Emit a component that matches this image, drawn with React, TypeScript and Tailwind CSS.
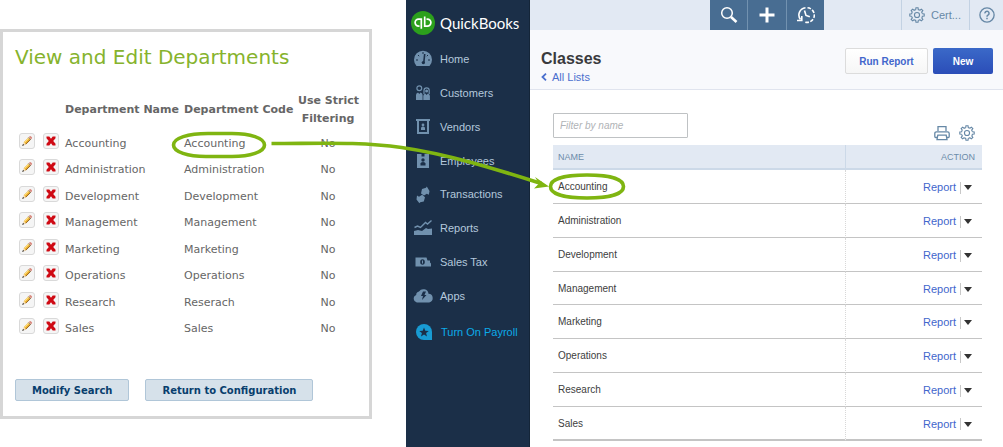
import React from "react";

const departments: [string, string][] = [
  ["Accounting", "Accounting"],
  ["Administration", "Administration"],
  ["Development", "Development"],
  ["Management", "Management"],
  ["Marketing", "Marketing"],
  ["Operations", "Operations"],
  ["Research", "Reserach"],
  ["Sales", "Sales"],
];

const classes = [
  "Accounting",
  "Administration",
  "Development",
  "Management",
  "Marketing",
  "Operations",
  "Research",
  "Sales",
];

function PencilIcon() {
  return (
    <svg viewBox="0 0 14 14" className="size-[14px]" aria-hidden="true">
      <path d="M3.700 8.200 8.700 3.200l2.200 2.200-5 5z" fill="#f0b430" />
      <path d="M4.400 8.700 9.300 3.800" stroke="#ffe48a" strokeWidth="1" />
      <path d="M5.600 10.300 10.700 5.300" stroke="#8a5a20" strokeWidth="0.9" />
      <path d="m8.800 3.100.9-.9q.6-.5 1.200 0l1 1q.5.6 0 1.200l-.9.9z" fill="#d98a80" />
      <path d="m8.300 3.500 2.300 2.300" stroke="#777" strokeWidth="0.8" />
      <path d="m3.700 8.200 2.200 2.200-3.400 1.300z" fill="#f3d9b0" />
      <path d="m3 9.900 1.300 1.200-2.200.9z" fill="#222" />
    </svg>
  );
}

function CrossIcon() {
  return (
    <svg viewBox="0 0 14 14" className="size-[14px]" aria-hidden="true">
      <path d="M2.500 2.500h2.800L7 4.700l1.700-2.200h2.800v1.700L9.200 7l2.300 2.800v1.700H8.700L7 9.300l-1.700 2.200H2.500V9.800L4.800 7 2.500 4.200z" fill="#cf0a14" />
    </svg>
  );
}

function GearIcon({ className }: { className: string }) {
  const tooth = "M8.400 3.300 8.700 1h2.600l.3 2.300";
  return (
    <svg viewBox="0 0 20 20" className={className} fill="none" stroke="currentColor" strokeWidth="1.400" aria-hidden="true">
      {[0, 45, 90, 135, 180, 225, 270, 315].map((a) => (
        <path key={a} d={tooth + "q1.600.400 2.100.900"} transform={`rotate(${a} 10 10)`} />
      ))}
      <circle cx="10" cy="10" r="3.200" />
    </svg>
  );
}

function NavIcon({ children }: { children: React.ReactNode }) {
  return (
    <svg viewBox="0 0 20 20" className="size-5 shrink-0" fill="currentColor" aria-hidden="true">
      {children}
    </svg>
  );
}

const dark = "#1b2f48";

const nav: { label: string; icon: React.ReactNode }[] = [
  {
    label: "Home",
    icon: (
      <>
        <path d="M3.500 17A9 9 0 1 1 16.500 17z" />
        <path d="M10 3v2M3 11h2M15 11h2M5 6l1.200 1.200M15 6l-1.200 1.200" stroke={dark} strokeWidth="1" />
        <path d="m11.700 5-1 9.500" stroke={dark} strokeWidth="1.600" />
        <circle cx="10.300" cy="13.600" r="1.600" fill={dark} />
      </>
    ),
  },
  {
    label: "Customers",
    icon: (
      <>
        <circle cx="6.300" cy="5.200" r="2.400" fill="none" stroke="currentColor" strokeWidth="1.200" />
        <path d="M3 17v-5q0-2 2-2.500L6.300 11l1.300-1.500q2 .5 2 2.500v5z" />
        <path d="M11 11V7.500a2.600 2.600 0 0 1 5.200 0V11" fill="none" stroke="currentColor" strokeWidth="1.200" />
        <circle cx="13.600" cy="8" r="1.500" />
        <path d="M10.300 17v-4q0-2 2-2.500l1.300 1.500 1.300-1.500q2 .5 2 2.500v4z" />
      </>
    ),
  },
  {
    label: "Vendors",
    icon: (
      <>
        <path d="M3 2h14v2H3zM4 4h2v13H4zM14 4h2v13h-2zM4 15h12v2H4z" />
        <circle cx="10" cy="8" r="1.400" />
        <path d="M8 13v-2q0-1.500 2-1.500t2 1.500v2z" />
      </>
    ),
  },
  {
    label: "Employees",
    icon: (
      <>
        <path d="M4 3h12v14H4z" />
        <path d="M8.500 3h3v2.500h-3z" fill={dark} />
        <circle cx="10" cy="9" r="1.700" fill={dark} />
        <path d="M7.500 14.500v-2q0-1.500 2.500-1.500t2.500 1.500v2z" fill={dark} />
      </>
    ),
  },
  {
    label: "Transactions",
    icon: (
      <>
        <path d="m8 8.500 1-4.500 4-1.200.8-1.300L16.500 6l-.7 3.800-2-1L11 10.500z" />
        <path d="m4 10.500 2 1.200 3.200-2L12 12.300l-1.200 4.200-3.600.8-.8 1L3.500 14.500z" />
      </>
    ),
  },
  {
    label: "Reports",
    icon: (
      <>
        <path d="m1.500 9.500 3-1.500 3 1.500 5-5 2 1.500 4-3.500" fill="none" stroke="currentColor" strokeWidth="1.400" />
        <path d="M1 17v-4l4-1 4 1 4-3 2 1 4-.5V17z" />
      </>
    ),
  },
  {
    label: "Sales Tax",
    icon: (
      <>
        <path d="M2.500 5.500h11l1 3h2.500v2l1 1v3h-15.500z" />
        <ellipse cx="9.500" cy="10" rx="2.300" ry="2.700" fill={dark} />
        <path d="M9.500 8.500v3" stroke="currentColor" />
      </>
    ),
  },
  {
    label: "Apps",
    icon: (
      <>
        <path d="M3.800 16.500a4 4 0 0 1-.6-7.600A3.500 3.500 0 0 1 6 5.500a5.200 5.200 0 0 1 9.500 2.300 4.400 4.400 0 0 1 .7 8.700z" />
        <path d="M10 5.500h3L11.500 9h2L9 14l1-4H8z" fill={dark} />
      </>
    ),
  },
];

export default function App() {
  return (
    <div className="relative flex min-h-screen items-stretch overflow-hidden bg-white font-['Liberation_Sans',Arial,sans-serif] text-[11px]">
      <section className="mt-[29px] mr-[34px] w-[372px] shrink-0 self-start border-[3px] border-[#d6d6d6] px-3 pt-[11px] pb-[15px] font-['DejaVu_Sans',Verdana,sans-serif] text-[#666]">
        <h1 className="text-[20px] leading-7 whitespace-nowrap text-[#86b32d]">View and Edit Departments</h1>
        <table className="mt-5 w-[343px] table-fixed border-collapse">
          <colgroup>
            <col className="w-[50px]" />
            <col className="w-[119px]" />
            <col className="w-[114px]" />
            <col className="w-[60px]" />
          </colgroup>
          <thead>
            <tr className="h-[38px] leading-[18px] whitespace-nowrap">
              <td />
              <th className="p-0 text-left">Department Name</th>
              <th className="p-0 text-left">Department Code</th>
              <th className="p-0">
                Use Strict
                <br />
                Filtering
              </th>
            </tr>
          </thead>
          <tbody>
            {departments.map(([name, code]) => (
              <tr key={name} className="h-[26px] odd:h-[27px]">
                <td className="p-0">
                  <div className="flex gap-2 pb-1 pl-1">
                    <button aria-label={`Edit ${name}`} className="flex size-4 items-center justify-center rounded-[3px] border border-[#d9d9d9] bg-[#f5f5f5]">
                      <PencilIcon />
                    </button>
                    <button aria-label={`Delete ${name}`} className="flex size-4 items-center justify-center rounded-[3px] border border-[#d9d9d9] bg-[#f5f5f5]">
                      <CrossIcon />
                    </button>
                  </div>
                </td>
                <td className="p-0 pt-[3px]">{name}</td>
                <td className="p-0 pt-[3px]">{code}</td>
                <td className="p-0 pt-[3px] text-center">No</td>
              </tr>
            ))}
          </tbody>
        </table>
        <div className="mt-[38px] flex gap-4 text-[10px] font-bold whitespace-nowrap text-[#083e6d]">
          <button className="h-[22px] rounded-[2px] border border-[#b0c6d8] bg-[#d6e1ea] px-4">Modify Search</button>
          <button className="h-[22px] rounded-[2px] border border-[#b0c6d8] bg-[#d6e1ea] px-4">Return to Configuration</button>
        </div>
      </section>

      <nav className="w-[124px] shrink-0 border-r border-[#142538] bg-[#1b2f48] text-[#b4c8dc]">
        <div className="flex h-[42px] items-center gap-[5px] pt-1 pl-[5px]">
          <svg viewBox="0 0 24 24" className="size-6 shrink-0" aria-hidden="true">
            <circle cx="12" cy="12" r="12" fill="#2ca01c" />
            <g fill="none" stroke="#fff" strokeWidth="1.700">
              <path d="M10.300 17.800V8.100H7.600a3.500 3.500 0 0 0 0 7h.9" />
              <path d="M13.700 5.500v9.600h2.700a3.500 3.500 0 0 0 0-7h-.9" />
            </g>
          </svg>
          <span className="font-['Lato',sans-serif] text-[15px] text-white">QuickBooks</span>
        </div>
        <ul>
          {nav.map((n) => (
            <li key={n.label} className="flex h-[34px] nth-5:h-[33px]">
              <a href="#" className="flex flex-1 items-center gap-[7px] pl-[7px]">
                <span className="flex text-[#7191ae]">
                  <NavIcon>{n.icon}</NavIcon>
                </span>
                {n.label}
              </a>
            </li>
          ))}
          <li>
            <a href="#" className="flex h-[38px] items-center gap-2 pl-[7px] text-[#0cabe9]">
              <span className="flex text-[#189bd3]">
                <NavIcon>
                  <path d="M11 2a8 8 0 1 0 0 16h8v-8a8 8 0 0 0-8-8z" />
                  <path d="m11 5.500 1.300 3.200 3.500.2-2.700 2.200.9 3.400-3-1.900-3 1.900.9-3.400-2.700-2.200 3.500-.2z" fill={dark} />
                </NavIcon>
              </span>
              Turn On Payroll
            </a>
          </li>
        </ul>
      </nav>

      <main className="min-w-0 flex-1">
        <div className="flex h-[30px] justify-end bg-[#e2e9f3] text-[#6688a6]">
          <div className="mr-[77px] flex divide-x divide-[#7292b0] bg-[#486d92] text-white">
            <button aria-label="Search" className="flex w-[38px] items-center justify-center">
              <svg viewBox="0 0 18 18" className="size-[18px]" fill="none" stroke="currentColor">
                <circle cx="7" cy="7" r="5.300" strokeWidth="1.500" />
                <path d="m11 11 5.500 5" strokeWidth="2.600" />
              </svg>
            </button>
            <button aria-label="Create" className="flex w-[39px] items-center justify-center">
              <svg viewBox="0 0 18 18" className="size-[18px]" stroke="currentColor" strokeWidth="3">
                <path d="M9 1.500v15M1.500 9h15" />
              </svg>
            </button>
            <button aria-label="Recent" className="flex w-[37px] items-center justify-center">
              <svg viewBox="0 0 18 18" className="size-[18px]" fill="none" stroke="currentColor" strokeWidth="1.600">
                <path d="M3.500 13.500A7.300 7.300 0 0 1 8.500 1.700" />
                <path d="M10.500 1.800a7.300 7.300 0 1 1-2.500 14.300" strokeDasharray="3.600 1.500" />
                <path d="M7.500 4.500 9 9.500l3.800 1.300" />
                <path d="M0 14.500h4.800V10" />
              </svg>
            </button>
          </div>
          <button className="flex w-[68px] items-center gap-[6px] border-l border-[#c3d2e3] pl-[7px]">
            <GearIcon className="size-4" />
            Cert...
          </button>
          <button aria-label="Help" className="flex w-[34px] items-center border-l border-[#c3d2e3] pl-[9px]">
            <svg viewBox="0 0 18 18" className="size-4" fill="none" stroke="currentColor" strokeWidth="1.500">
              <circle cx="9" cy="9" r="8" />
              <path d="M6.700 7.200a2.300 2.300 0 1 1 3.700 1.700q-1.400.9-1.400 2" strokeWidth="1.700" />
              <path d="M9 12v1.800" strokeWidth="1.700" />
            </svg>
          </button>
        </div>

        <header className="flex h-[60px] justify-between border-b border-[#e0e4ee] bg-[#f8f9fc] pr-[10px] pl-[11px]">
          <div className="pt-[19px]">
            <h2 className="text-[16px] leading-5 font-bold text-[#393a3d]">Classes</h2>
            <a href="#" className="flex items-center gap-[5px] leading-4 text-[#4a6fce]">
              <svg viewBox="0 0 6 8" className="h-2 w-[6px]" fill="none" stroke="currentColor" strokeWidth="1.800">
                <path d="M5 .7 1.500 4 5 7.300" />
              </svg>
              All Lists
            </a>
          </div>
          <div className="flex gap-[5px] pt-[18px] text-[10px] font-bold">
            <button className="h-[26px] w-[83px] rounded-[2px] border border-[#dcdcdc] bg-gradient-to-b from-white to-[#f6f6f6] text-[#4266cc]">
              Run Report
            </button>
            <button className="h-[26px] w-[60px] rounded-[2px] bg-gradient-to-b from-[#3b69c8] to-[#2b4db8] text-white">New</button>
          </div>
        </header>

        <div className="pr-[21px] pl-[23px]">
          <div className="flex h-[55px] items-start justify-between pt-[23px]">
            <input
              aria-label="Filter by name"
              placeholder="Filter by name"
              className="h-[25px] w-[135px] rounded-[1px] border border-[#bfc2c4] bg-white px-[6px] text-[10px] italic placeholder:text-[#b0b3b6]"
            />
            <div className="flex gap-[9px] pt-3 pr-[7px] text-[#6688a6]">
              <button aria-label="Print">
                <svg viewBox="0 0 16 16" className="size-4" fill="none" stroke="currentColor" strokeWidth="1.300">
                  <path d="M4 6V1.700h8V6" />
                  <path d="M3 12.500H1.700Q.8 12.500.8 11.600V8.500Q.8 6.800 2.500 6.800h11q1.700 0 1.700 1.700v3.100q0 .9-.9.900H13" />
                  <path d="M3.800 10.200h8.400l.8 4.500H3z" />
                </svg>
              </button>
              <button aria-label="Settings">
                <GearIcon className="size-4" />
              </button>
            </div>
          </div>
          <table className="w-full table-fixed border-separate border-spacing-0">
            <colgroup>
              <col />
              <col className="w-[137px]" />
            </colgroup>
            <thead>
              <tr className="h-[25px] bg-[#e2e9f3] text-[9px] text-[#6c8caa]">
                <th className="border-b-2 border-[#ccd9e8] p-0 pt-[3px] pl-[5px] text-left font-normal">NAME</th>
                <th className="border-b-2 border-l border-[#ccd9e8] p-0 pt-[3px] pr-[7px] text-right font-normal">ACTION</th>
              </tr>
            </thead>
            <tbody>
              {classes.map((c) => (
                <tr key={c} className="group h-[34px] text-[#404040] nth-4:h-[33px]">
                  <td className="border-b border-[#c4c4c4] p-0 pl-[5px] text-[10px] group-last:border-b-2">{c}</td>
                  <td className="border-b border-l border-b-[#c4c4c4] border-l-[#d8d8d8] p-0 pt-[2px] pr-[10px] [border-left-style:dotted] group-last:border-b-2">
                    <div className="flex items-center justify-end">
                      <a href="#" className="text-[#4266cc]">
                        Report
                      </a>
                      <button aria-label={`Actions for ${c}`} className="ml-1 flex h-3 items-center border-l border-[#c8c8c8] pl-[3px]">
                        <svg viewBox="0 0 8 5" className="h-[5px] w-2" fill="#333">
                          <path d="M0 0h8L4 5z" />
                        </svg>
                      </button>
                    </div>
                  </td>
                </tr>
              ))}
            </tbody>
          </table>
        </div>
      </main>

      <svg
        viewBox="0 0 640 210"
        className="pointer-events-none absolute top-0 left-0 h-[210px] w-[640px]"
        fill="none"
        stroke="#7fb511"
        strokeWidth="3.600"
        aria-hidden="true"
      >
        <path d="M208 133.500h24c18 0 32.500 4.500 32.500 11.500s-14.500 11.500-32.500 11.500h-26c-18 0-32.500-4.500-32.500-11.500s14.500-11.500 34.500-11.500z" />
        <path d="M271.500 143.500c50 0 88-2 130 4 48 7 92 21 140 36" />
        <path d="m549 186.500-14-9.500 4 6.500-5 5z" fill="#7fb511" stroke="none" />
        <path d="M587 175c21 0 36.500 3.500 36.500 11.500S608 198 587 198s-36.500-3.500-36.500-11.500S566 175 587 175z" />
      </svg>
    </div>
  );
}
